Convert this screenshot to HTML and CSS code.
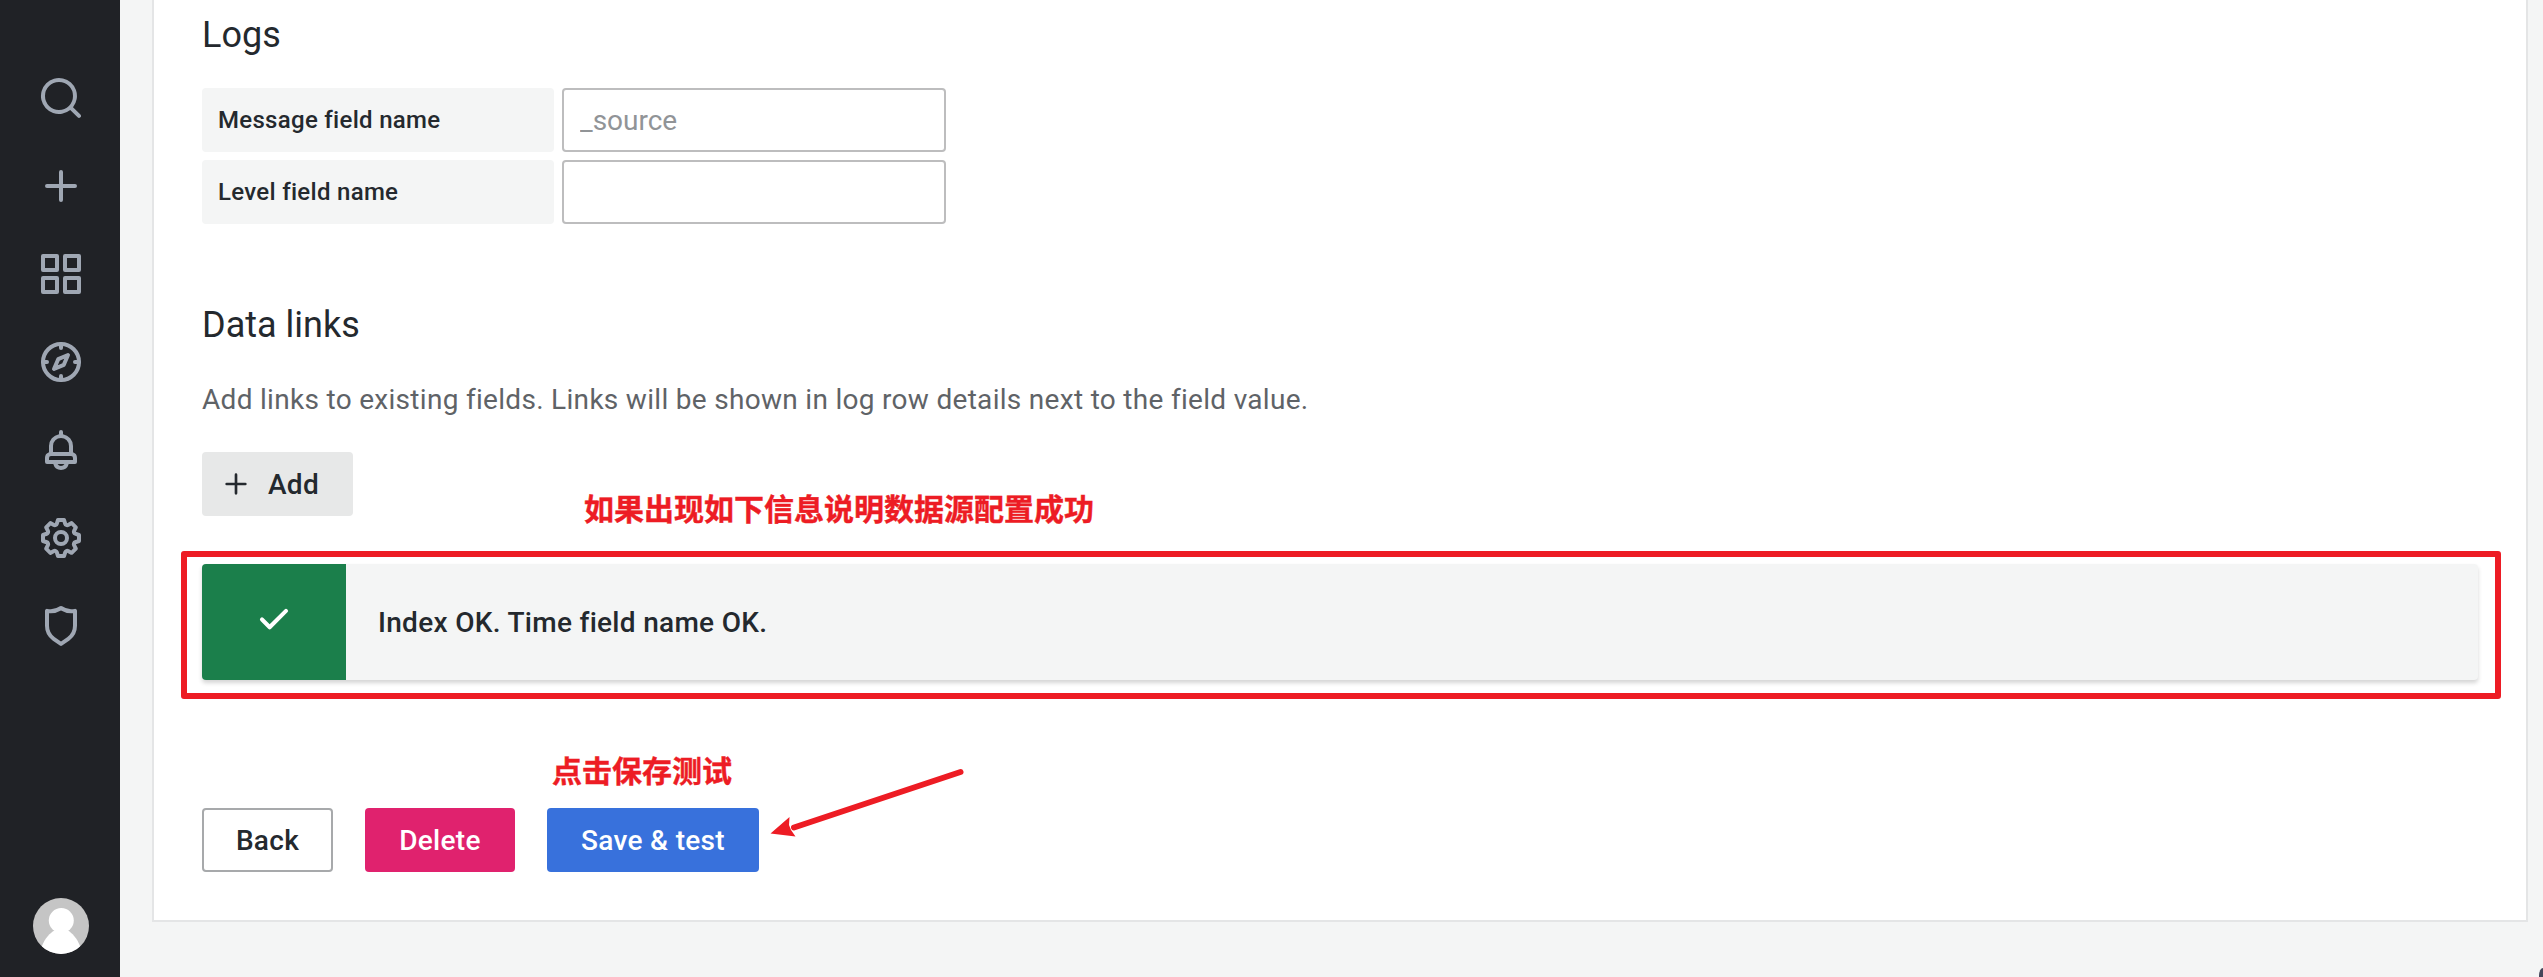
FILE: index.html
```
<!DOCTYPE html>
<html lang="en">
<head>
<meta charset="utf-8">
<title>Data source settings</title>
<link rel="stylesheet" href="styles.css">
</head>
<body>
<div class="app">
  <nav class="sidebar">
    <div class="sidebar-menu">
      <svg class="nav-icon" viewBox="0 0 24 24"><path d="M21.71,20.29,18,16.61A9,9,0,1,0,16.61,18l3.68,3.68a1,1,0,0,0,1.42,0A1,1,0,0,0,21.71,20.29ZM11,18a7,7,0,1,1,7-7A7,7,0,0,1,11,18Z"/></svg>
      <svg class="nav-icon" viewBox="0 0 24 24"><path d="M19,11H13V5a1,1,0,0,0-2,0v6H5a1,1,0,0,0,0,2h6v6a1,1,0,0,0,2,0V13h6a1,1,0,0,0,0-2Z"/></svg>
      <svg class="nav-icon" viewBox="0 0 24 24"><path d="M10,13H3a1,1,0,0,0-1,1v7a1,1,0,0,0,1,1h7a1,1,0,0,0,1-1V14A1,1,0,0,0,10,13ZM9,20H4V15H9ZM21,2H14a1,1,0,0,0-1,1v7a1,1,0,0,0,1,1h7a1,1,0,0,0,1-1V3A1,1,0,0,0,21,2ZM20,9H15V4h5Zm1,4H14a1,1,0,0,0-1,1v7a1,1,0,0,0,1,1h7a1,1,0,0,0,1-1V14A1,1,0,0,0,21,13Zm-1,7H15V15h5ZM10,2H3A1,1,0,0,0,2,3v7a1,1,0,0,0,1,1h7a1,1,0,0,0,1-1V3A1,1,0,0,0,10,2ZM9,9H4V4H9Z"/></svg>
      <svg class="nav-icon nav-stroke" viewBox="0 0 24 24"><circle cx="12" cy="12" r="9"/><path d="M12 3v2M12 19v2M3 12h2M19 12h2M15.500 8.500L10.600 10.600L8.500 15.500L13.400 13.400Z"/></svg>
      <svg class="nav-icon" viewBox="0 0 24 24"><path d="M18,13.18V10a6,6,0,0,0-5-5.91V3a1,1,0,0,0-2,0V4.090A6,6,0,0,0,6,10v3.180A3,3,0,0,0,4,16v2a1,1,0,0,0,1,1H8.140a4,4,0,0,0,7.720,0H19a1,1,0,0,0,1-1V16A3,3,0,0,0,18,13.180ZM8,10a4,4,0,0,1,8,0v3H8Zm4,10a2,2,0,0,1-1.720-1h3.440A2,2,0,0,1,12,20Zm6-3H6V16a1,1,0,0,1,1-1H17a1,1,0,0,1,1,1Z"/></svg>
      <svg class="nav-icon" viewBox="0 0 24 24"><path d="M21.320,9.550l-1.890-.630.890-1.780A1,1,0,0,0,20.130,6L18,3.870a1,1,0,0,0-1.150-.190l-1.780.890-.630-1.890A1,1,0,0,0,13.500,2h-3a1,1,0,0,0-.950.680L8.920,4.570,7.140,3.680A1,1,0,0,0,6,3.870L3.870,6a1,1,0,0,0-.190,1.150l.890,1.780-1.890.630A1,1,0,0,0,2,10.500v3a1,1,0,0,0,.680.950l1.890.630-.890,1.780A1,1,0,0,0,3.870,18L6,20.130a1,1,0,0,0,1.150.190l1.780-.890.630,1.890a1,1,0,0,0,.950.680h3a1,1,0,0,0,.950-.680l.630-1.890,1.780.890A1,1,0,0,0,18,20.130L20.130,18a1,1,0,0,0,.190-1.150l-.890-1.780,1.890-.630A1,1,0,0,0,22,13.500v-3A1,1,0,0,0,21.320,9.550ZM20,12.780l-1.200.400A2,2,0,0,0,17.640,16l.570,1.140-1.100,1.100L16,17.640a2,2,0,0,0-2.790,1.160l-.400,1.200H11.220l-.400-1.200A2,2,0,0,0,8,17.640l-1.140.570-1.100-1.100L6.360,16A2,2,0,0,0,5.200,13.180L4,12.780V11.220l1.200-.400A2,2,0,0,0,6.360,8L5.790,6.890l1.100-1.100L8,6.360A2,2,0,0,0,10.820,5.200l.400-1.200h1.560l.400,1.200A2,2,0,0,0,16,6.360l1.140-.570,1.100,1.100L17.640,8a2,2,0,0,0,1.160,2.790l1.200.400ZM12,8a4,4,0,1,0,4,4A4,4,0,0,0,12,8Zm0,6a2,2,0,1,1,2-2A2,2,0,0,1,12,14Z"/></svg>
      <svg class="nav-icon" viewBox="0 0 24 24"><path d="M19.630,3.650a1,1,0,0,0-.840-.200,8,8,0,0,1-6.220-1.270,1,1,0,0,0-1.140,0A8,8,0,0,1,5.210,3.450a1,1,0,0,0-.840.200A1,1,0,0,0,4,4.430v7.450a9,9,0,0,0,3.770,7.330l3.650,2.600a1,1,0,0,0,1.160,0l3.650-2.600A9,9,0,0,0,20,11.880V4.430A1,1,0,0,0,19.630,3.650ZM18,11.880a7,7,0,0,1-2.930,5.700L12,19.770,8.930,17.580A7,7,0,0,1,6,11.880V5.580a10,10,0,0,0,6-1.390,10,10,0,0,0,6,1.390Z"/></svg>
    </div>
    <svg class="avatar" viewBox="0 0 56 56">
      <defs><clipPath id="avatar-clip"><circle cx="28" cy="28" r="28"/></clipPath></defs>
      <g clip-path="url(#avatar-clip)">
        <rect width="56" height="56" fill="#c5c5c5"/>
        <circle cx="28.300" cy="22.500" r="12.500" fill="#fff"/>
        <path d="M22 32H34.500C39 35 44 40 47 48V56H9V48C12 40 17 35 22 32Z" fill="#fff"/>
      </g>
    </svg>
  </nav>

  <main class="page">
    <section class="panel">
      <h3 class="heading">Logs</h3>
      <div class="fields">
        <label class="field-label" for="message">Message field name</label>
        <input class="field-input" id="message" type="text" placeholder="_source">
        <label class="field-label" for="level">Level field name</label>
        <input class="field-input" id="level" type="text">
      </div>

      <h3 class="heading heading-links">Data links</h3>
      <p class="description">Add links to existing fields. Links will be shown in log row details next to the field value.</p>
      <button class="btn btn-add" type="button">
        <svg class="add-icon" viewBox="0 0 24 24"><path d="M19,11H13V5a1,1,0,0,0-2,0v6H5a1,1,0,0,0,0,2h6v6a1,1,0,0,0,2,0V13h6a1,1,0,0,0,0-2Z"/></svg>
        <span>Add</span>
      </button>

      <div class="alert">
        <div class="alert-icon">
          <svg class="check-icon" viewBox="0 0 24 24"><path d="M18.710,7.210a1,1,0,0,0-1.420,0L9.840,14.670,6.710,11.530A1,1,0,1,0,5.290,13l3.840,3.840a1,1,0,0,0,1.420,0l8.160-8.160A1,1,0,0,0,18.710,7.210Z"/></svg>
        </div>
        <div class="alert-title">Index OK. Time field name OK.</div>
        <div class="mark-box"></div>
        <div class="mark-text mark-success">如果出现如下信息说明数据源配置成功</div>
      </div>

      <div class="actions">
        <button class="btn btn-back" type="button">Back</button>
        <button class="btn btn-delete" type="button">Delete</button>
        <button class="btn btn-save" type="button">Save &amp; test</button>
        <div class="mark-text mark-save">点击保存测试</div>
        <svg class="mark-arrow" viewBox="0 0 200 80"><path class="arrow-line" d="M190.500 12L24 67.500" /><path class="arrow-head" d="M0.500 73.500L19.500 57L19 65L21 70L25.500 76.500Z"/></svg>
      </div>
    </section>
  </main>
  <div class="corner"></div>
</div>
</body>
</html>
```
FILE: styles.css
```
* {
  box-sizing: border-box;
}

body {
  height: 977px;
  margin: 0;
  overflow: hidden;
  background: #f4f5f5;
  color: #24292e;
  font-family: Roboto, "Liberation Sans", sans-serif;
  font-size: 28px;
  letter-spacing: 0.01071em;
}

.app {
  position: relative;
  display: flex;
  height: 977px;
  overflow: hidden;
}

.sidebar {
  flex: none;
  display: flex;
  flex-direction: column;
  justify-content: space-between;
  width: 120px;
  padding: 74px 0 23px 2px;
  align-items: center;
  background: #202226;
}

.sidebar-menu {
  display: flex;
  flex-direction: column;
  gap: 40px;
}

.nav-icon {
  display: block;
  width: 48px;
  height: 48px;
  fill: #9fa7b3;
}

.nav-stroke {
  fill: none;
  stroke: #9fa7b3;
  stroke-width: 2;
  stroke-linecap: round;
  stroke-linejoin: round;
}

.avatar {
  display: block;
  width: 56px;
  height: 56px;
}

.page {
  flex: 1;
  padding: 0 15px 55px 32px;
}

.panel {
  height: 922px;
  padding: 13px 48px 48px;
  border: 2px solid #e4e5e6;
  border-top: 0;
  background: #fff;
}

.heading {
  margin: 0;
  font-size: 36px;
  font-weight: 400;
  line-height: 44px;
  letter-spacing: 0;
}

.fields {
  display: grid;
  grid-template-columns: 352px 384px;
  grid-auto-rows: 64px;
  gap: 8px;
  margin-top: 31px;
}

.field-label {
  padding: 0 16px;
  border-radius: 4px;
  background: #f4f5f5;
  font-size: 24px;
  font-weight: 500;
  line-height: 64px;
  letter-spacing: 0.0125em;
}

.field-input {
  padding: 0 16px;
  border: 2px solid #bdbdbe;
  border-radius: 4px;
  background: #fff;
  color: #24292e;
  font: inherit;
  letter-spacing: 0;
}

.field-input::placeholder {
  color: #919497;
  opacity: 1;
}

.heading-links {
  margin-top: 79px;
}

.description {
  margin: 30px 0 0;
  color: #5f6367;
  line-height: 45px;
}

.btn {
  display: flex;
  align-items: center;
  justify-content: center;
  height: 64px;
  padding: 0;
  border: 0;
  border-radius: 4px;
  color: #fff;
  font: inherit;
  font-weight: 500;
  letter-spacing: 0.01071em;
}

.btn-add {
  justify-content: flex-start;
  gap: 16px;
  width: 151px;
  margin-top: 30px;
  padding-left: 18px;
  background: #e7e8e8;
  color: #24292e;
}

.add-icon {
  width: 32px;
  height: 32px;
  fill: #24292e;
}

.alert {
  position: relative;
  display: flex;
  height: 116px;
  margin-top: 48px;
  border-radius: 4px;
  background: #f4f5f5;
  box-shadow: 0 3px 4px rgba(0, 0, 0, 0.17);
}

.alert-icon {
  display: flex;
  align-items: center;
  justify-content: center;
  width: 144px;
  padding-bottom: 6px;
  border-radius: 4px 0 0 4px;
  background: #1b7f4b;
}

.check-icon {
  width: 48px;
  height: 48px;
  fill: #fff;
}

.alert-title {
  padding-left: 32px;
  font-weight: 500;
  line-height: 117px;
}

.mark-box {
  position: absolute;
  inset: -13px -23px -19px -21px;
  border: 6px solid #ed1c24;
  border-radius: 3px;
}

.mark-text {
  position: absolute;
  color: #ed1c24;
  font-family: "Noto Sans CJK SC", sans-serif;
  font-size: 30px;
  font-weight: 700;
  line-height: 40px;
  letter-spacing: 0;
  white-space: nowrap;
  -webkit-text-stroke: 0.4px #ed1c24;
}

.mark-success {
  left: 382px;
  top: -77px;
}

.actions {
  position: relative;
  display: flex;
  gap: 32px;
  margin-top: 128px;
}

.btn-back {
  width: 131px;
  border: 2px solid #a7a9ab;
  background: #fff;
  color: #24292e;
}

.btn-delete {
  width: 150px;
  background: #e0226e;
}

.btn-save {
  width: 212px;
  background: #3871dc;
}

.mark-save {
  left: 350px;
  top: -59px;
}

.mark-arrow {
  position: absolute;
  left: 568px;
  top: -48px;
  width: 200px;
  height: 80px;
}

.arrow-line {
  fill: none;
  stroke: #ed1c24;
  stroke-width: 6;
  stroke-linecap: round;
}

.arrow-head {
  fill: #ed1c24;
}

/* Edge of the floating widget that peeks in at the bottom right */
.corner {
  position: absolute;
  right: 0;
  bottom: 0;
  width: 4px;
  height: 9px;
  border-top-left-radius: 4px 8px;
  background: #44465a;
}
```
